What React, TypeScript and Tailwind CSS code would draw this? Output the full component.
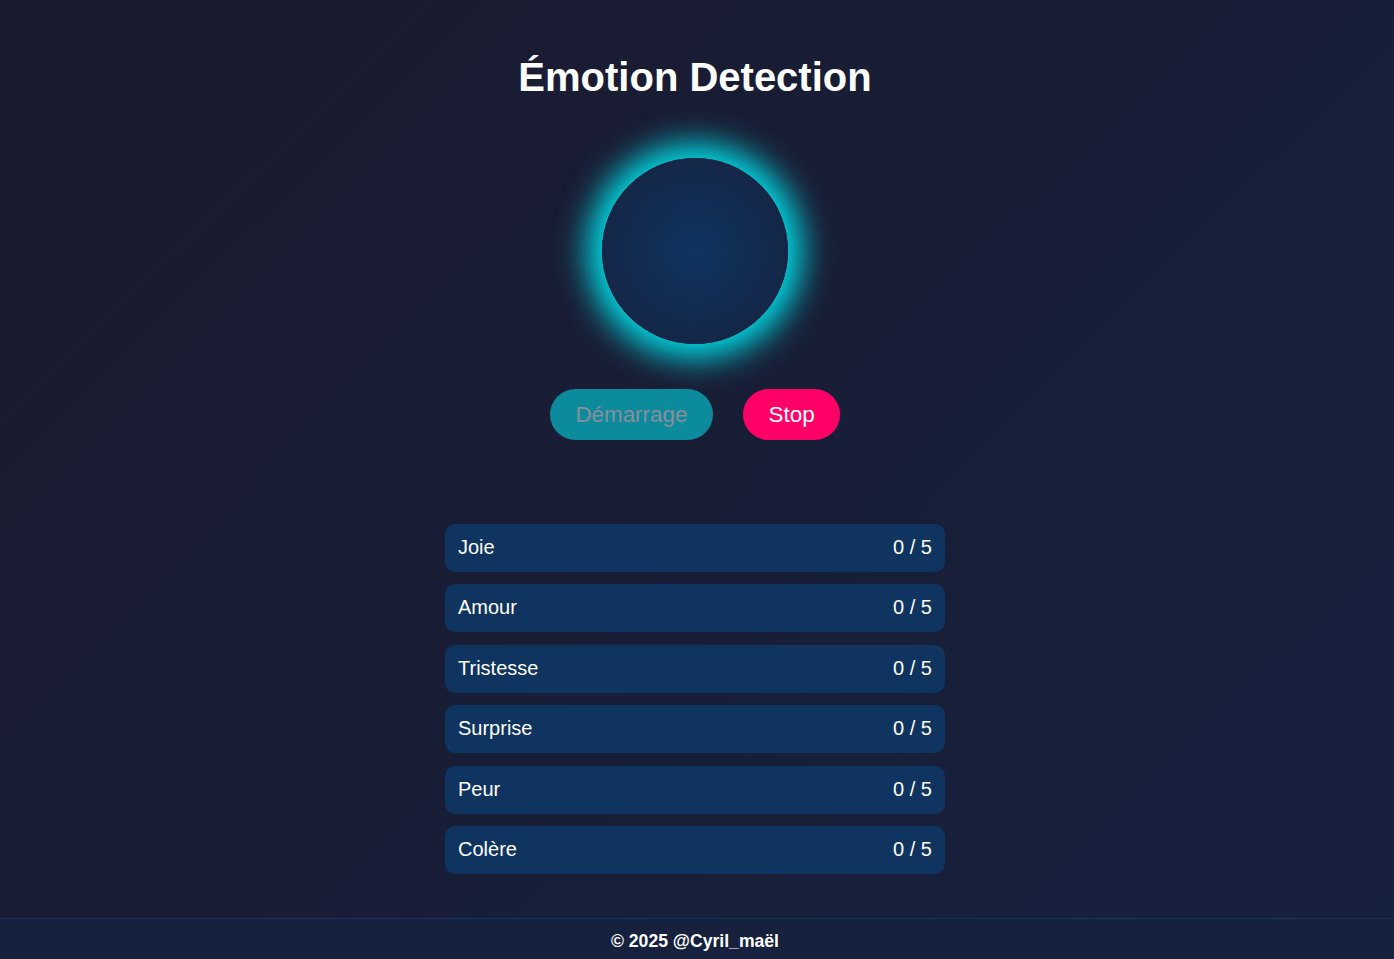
export default function App() {
  const emotions = ["Joie", "Amour", "Tristesse", "Surprise", "Peur", "Colère"];
  return (
    <div
      className="min-h-[959px] flex flex-col bg-[linear-gradient(135deg,#1a1a2e,#16213e)] text-white"
      style={{ fontFamily: '"Liberation Sans", Arial, sans-serif' }}
    >
      <main className="flex-1 flex flex-col items-center pr-[4px]">
        <h1 className="mt-[54px] text-[40px] leading-[46px] font-bold">Émotion Detection</h1>
        <div className="mt-[58px] w-[186px] h-[186px] rounded-full bg-[radial-gradient(circle,#0f3460,#16213e)] shadow-[0_0_32px_14px_#00dfe8]" />
        <div className="mt-[45px] flex gap-[30px]">
          <button
            disabled
            className="h-[51px] px-[25.6px] rounded-full bg-[#0b8b9b] text-[#8a8e9b] text-[22.4px]"
          >
            Démarrage
          </button>
          <button className="h-[51px] px-[25.6px] rounded-full bg-[#ff0066] text-white text-[22.4px]">
            Stop
          </button>
        </div>
        <div className="mt-[84px] w-[500px] flex flex-col gap-[12.4px] mb-[44px]">
          {emotions.map((e) => (
            <div
              key={e}
              className="h-[48px] rounded-[10px] bg-[#0f3460] flex items-center justify-between px-[13px] pb-[2px] text-[20px]"
            >
              <span>{e}</span>
              <span>0 / 5</span>
            </div>
          ))}
        </div>
      </main>
      <footer className="h-[41px] border-t border-[#0f3460] bg-[#16213e] flex items-center justify-center pt-[5px] pr-[4px] text-[17.6px] font-bold">
        © 2025 @Cyril_maël
      </footer>
    </div>
  );
}
